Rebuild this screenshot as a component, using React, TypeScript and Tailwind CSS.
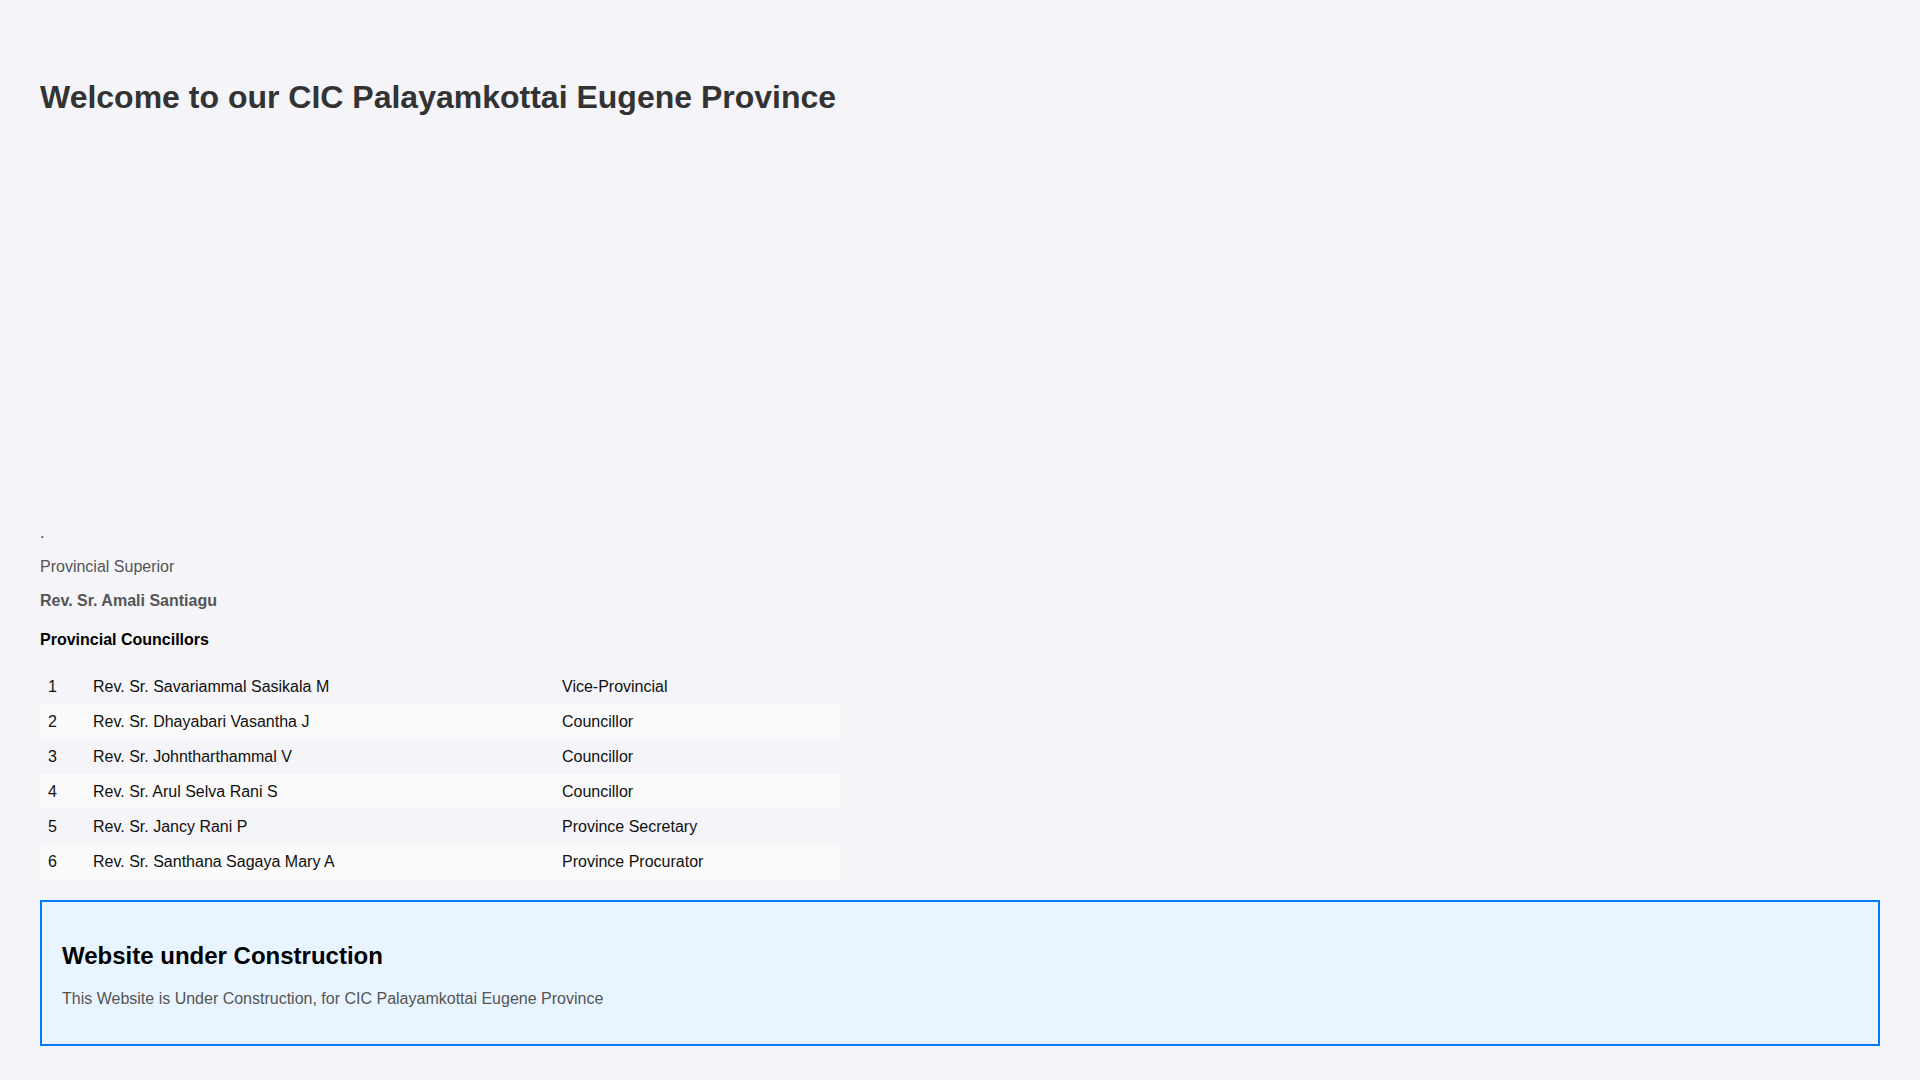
import React from "react";

const rows: [string, string, string][] = [
  ["1", "Rev. Sr. Savariammal Sasikala M", "Vice-Provincial"],
  ["2", "Rev. Sr. Dhayabari Vasantha J", "Councillor"],
  ["3", "Rev. Sr. Johntharthammal V", "Councillor"],
  ["4", "Rev. Sr. Arul Selva Rani S", "Councillor"],
  ["5", "Rev. Sr. Jancy Rani P", "Province Secretary"],
  ["6", "Rev. Sr. Santhana Sagaya Mary A", "Province Procurator"],
];

export default function App() {
  return (
    <div
      className="min-h-[1080px] w-full bg-[#f4f4f9] px-10 pb-[35px] text-[16px] text-black"
      style={{ fontFamily: '"Liberation Sans", Arial, sans-serif' }}
    >
      <h1 className="pt-[79px] text-[32px] font-bold leading-[1.15] text-[#333333]">
        Welcome to our CIC Palayamkottai Eugene Province
      </h1>

      <div className="h-[408px]" />

      <p className="leading-[1.15] text-[#333333]">.</p>
      <p className="mt-[16px] leading-[1.15] text-[#555555]">Provincial Superior</p>
      <p className="mt-[15px] font-bold leading-[1.15] text-[#555555]">Rev. Sr. Amali Santiagu</p>
      <p className="mt-[21px] font-bold leading-[1.15] text-black">Provincial Councillors</p>

      <div className="mt-[20px] w-[800px]">
        {rows.map((r, i) => (
          <div
            key={r[0]}
            className={
              "grid h-[35px] grid-cols-[45px_469px_286px] items-center leading-[19px] text-[#111111] " +
              (i % 2 === 1 ? "bg-[#fafafa]" : "")
            }
          >
            <div className="px-2">{r[0]}</div>
            <div className="px-2">{r[1]}</div>
            <div className="px-2">{r[2]}</div>
          </div>
        ))}
      </div>

      <div className="mt-[21px] border-2 border-[#007bff] bg-[#e8f4ff] p-5">
        <h2 className="my-[20px] text-[24px] font-bold leading-[1.15] text-black">
          Website under Construction
        </h2>
        <p className="my-4 leading-[1.15] text-[#555555]">
          This Website is Under Construction, for CIC Palayamkottai Eugene Province
        </p>
      </div>
    </div>
  );
}
